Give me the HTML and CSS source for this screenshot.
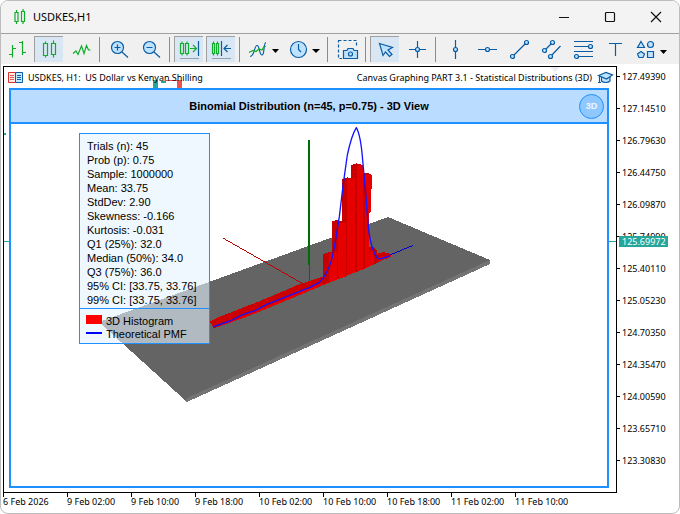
FILE: index.html
```html
<!DOCTYPE html>
<html lang="en">
<head>
<meta charset="utf-8">
<title>USDKES,H1</title>
<link rel="stylesheet" href="styles.css">
</head>
<body>
<div class="window">
  <header class="titlebar">
    <svg class="app-icon" width="14" height="16" viewBox="0 0 14 16" aria-hidden="true"><path class="gr" d="M2 3.500h3v9H2zM3.500 1v2.500M3.500 12.500V15M8.500 2.500h3v10h-3zM10 0v2.500M10 12.500V15"/></svg>
    <h1 class="window-title">USDKES,H1</h1>
    <div class="window-controls">
      <button type="button" aria-label="Minimize"><svg width="12" height="12" viewBox="0 0 12 12"><path class="bk" d="M1 6.500h10"/></svg></button>
      <button type="button" aria-label="Maximize"><svg width="12" height="12" viewBox="0 0 12 12"><rect class="bk" x="1.500" y="1.500" width="9" height="9" rx="1"/></svg></button>
      <button type="button" aria-label="Close"><svg width="12" height="12" viewBox="0 0 12 12"><path class="bk" d="M1 1l10 10M11 1L1 11"/></svg></button>
    </div>
  </header>

  <nav class="toolbar" aria-label="Chart tools">
    <button type="button" class="tool" aria-label="Bars"><svg viewBox="1 2 29 26"><path class="gr" d="M11.500 11v12.500M8 20.500h3.500M11.500 14.500H15M21.500 7v14M18 8.500h3.500M21.500 18.500H25"/></svg></button>
    <button type="button" class="tool on" aria-label="Candlesticks"><svg viewBox="1 2 29 26"><path class="gr" d="M10.500 9.500h4v12h-4zM12.500 7.500v2M12.500 21.500v2M18.500 9.500h4v11h-4zM20.500 6.500v3M20.500 20.500v3"/></svg></button>
    <button type="button" class="tool" aria-label="Line chart"><svg viewBox="1 2 29 26"><path class="gr" d="M8 19.500L11 17l2 3.500 3.500-8.500 2.500 7.500 2.500-8 2 4.500h2"/></svg></button>
    <span class="sep"></span>
    <button type="button" class="tool" aria-label="Zoom in"><svg viewBox="1 2 29 26"><path class="bl" d="M19 18l6 5.500"/><circle class="bf" cx="14.500" cy="13.500" r="6"/><path class="bl" d="M11.500 13.500h6M14.500 10.500v6"/></svg></button>
    <button type="button" class="tool" aria-label="Zoom out"><svg viewBox="1 2 29 26"><path class="bl" d="M19 18l6 5.500"/><circle class="bf" cx="14.500" cy="13.500" r="6"/><path class="bl" d="M11.500 13.500h6"/></svg></button>
    <span class="sep"></span>
    <button type="button" class="tool on" aria-label="Auto scroll"><svg viewBox="1 2 29 26"><path class="gr" d="M7.500 9.500h3v10h-3zM9 7.500v2M9 19.500v2M12.500 9.500h3v10h-3zM14 7.500v2M14 19.500v2M17 14.500h6.500M20 11l3.500 3.500L20 18"/><path class="bl" d="M25.500 7v15"/><path class="un" d="M7 24.500h19"/></svg></button>
    <button type="button" class="tool on" aria-label="Chart shift"><svg viewBox="1 2 29 26"><path class="gr" d="M7.500 9.500h2v10h-2zM8.500 7.500v2M8.500 19.500v2M11.500 9.500h2v10h-2zM12.500 7.500v2M12.500 19.500v2"/><path class="bl" d="M16.500 7v15M26 14.500h-6.500M22.500 11L19 14.500l3.500 3.500"/><path class="un" d="M7 24.500h19"/></svg></button>
    <span class="sep"></span>
    <button type="button" class="tool menu" aria-label="Indicators"><svg viewBox="1 2 38 26"><path class="bl" d="M7 22.500c5 0 4-11 7-11s2 9.500 5 9.500 1-12 4-12.500"/><path class="gr" d="M6 18.500l4-2 3 1 3-2.500 3 1 2-3.500h2"/><path class="ar" d="M29 15h7l-3.500 4z"/></svg></button>
    <button type="button" class="tool menu" aria-label="Timeframes"><svg viewBox="1 2 38 26"><circle class="bf" cx="14.500" cy="15.500" r="8"/><path class="bl" d="M14.500 10v5.500l2.500 2.500"/><path class="ar" d="M28 15h8l-4 4z"/></svg></button>
    <span class="sep"></span>
    <button type="button" class="tool" aria-label="Screenshot"><svg viewBox="1 2 29 26"><rect class="bl" x="7.500" y="6.500" width="18" height="18" stroke-dasharray="3 2"/><path d="M11 13h16v13H11z" fill="#f0f0f0"/><path class="bf" d="M12.500 16.500h3.500l1-2h5l1 2h3.500v8h-14z"/><circle class="bl" cx="19.500" cy="20" r="2"/></svg></button>
    <span class="sep"></span>
    <button type="button" class="tool on" aria-label="Cursor"><svg viewBox="1 2 29 26"><path class="bf" d="M10.500 9.500l13 4-4.500 2.500 4 4.500-2.500 2-4-4.500-2.500 3.500z"/></svg></button>
    <button type="button" class="tool" aria-label="Crosshair"><svg viewBox="1 2 29 26"><path class="bl" d="M16.500 7v17M8 15.500h17"/><circle class="bf" cx="16.500" cy="15.500" r="2"/></svg></button>
    <span class="sep"></span>
    <button type="button" class="tool" aria-label="Vertical line"><svg viewBox="1 2 29 26"><path class="bl" d="M16.500 6v19"/><circle class="bf" cx="16.500" cy="15.500" r="2"/></svg></button>
    <button type="button" class="tool" aria-label="Horizontal line"><svg viewBox="1 2 29 26"><path class="bl" d="M7 15.500h19"/><circle class="bf" cx="16.500" cy="15.500" r="2"/></svg></button>
    <button type="button" class="tool" aria-label="Trendline"><svg viewBox="1 2 29 26"><path class="bl" d="M9.500 22.500l14-14"/><circle class="bf" cx="9.500" cy="22.500" r="2"/><circle class="bf" cx="23.500" cy="8.500" r="2"/></svg></button>
    <button type="button" class="tool" aria-label="Channel"><svg viewBox="1 2 29 26"><path class="bl" d="M9.500 16.500l8-8M15.500 22.500l10-10.500"/><circle class="bf" cx="9.500" cy="16.500" r="2"/><circle class="bf" cx="17.500" cy="8.500" r="2"/><circle class="bf" cx="15.500" cy="22.500" r="2"/></svg></button>
    <button type="button" class="tool" aria-label="Fibonacci"><svg viewBox="1 2 29 26"><path class="bl" d="M7 7.500h19M7 12.500h15M7 17.500h19M11 22.500h15"/><circle class="bf" cx="23.500" cy="12.500" r="2"/><circle class="bf" cx="9.500" cy="22.500" r="2"/></svg></button>
    <button type="button" class="tool" aria-label="Text"><svg viewBox="1 2 29 26"><path class="bl" d="M10 9.500h13M16.500 9.500V22"/></svg></button>
    <button type="button" class="tool menu" aria-label="Shapes"><svg viewBox="1 2 38 26"><path class="bf" d="M10 7.500l3.500 6h-7zM16.500 17.500h6v6h-6zM10 17.500l3.500 2.500-1.500 3.500H8L6.500 20z"/><circle class="bf" cx="19.500" cy="10.500" r="3"/><path class="ar" d="M29 16h7l-3.500 4z"/></svg></button>
  </nav>

  <main class="chart">
    <section class="plot">
      <div class="info">
        <svg class="candles" width="32" height="8" viewBox="0 0 32 8" aria-hidden="true"><path d="M1 0h5v8H1zM9 1h5v2H9z" fill="#26a69a"/><path d="M14 0h16v8h-5V1H14z" fill="#ef5350"/></svg>
        <svg class="shift-mark" width="10" height="5" viewBox="0 0 10 5" aria-hidden="true"><path d="M0 0h10L5 5z" fill="#efe9f3"/></svg>
        <svg class="info-icon" width="15" height="12" viewBox="0 0 15 12" aria-hidden="true"><path d="M.5.5h7v10h-7z" fill="#ffe9e6" stroke="#d9312d"/><path d="M7.500.5h7v10h-7z" fill="#c8e8ff" stroke="#0a5ca4"/><path d="M2 3.500h4M2 5.500h4M2 7.500h4" stroke="#df5a56"/><path d="M9 3.500h4M9 5.500h4M9 7.500h4" stroke="#0a5ca4"/></svg>
        <span class="symbol">USDKES, H1:&nbsp; US Dollar vs Kenyan Shilling</span>
        <span class="expert">Canvas Graphing PART 3.1 - Statistical Distributions (3D)</span>
        <svg class="cap" width="15" height="12" viewBox="0 0 15 12" aria-hidden="true"><path class="bf" d="M3.500 5v4c2 2 6.500 2 8.500 0V5"/><path class="bf" d="M.5 3.500L8 .5l6.500 2.500-6 4z"/><path class="bl" d="M1.500 4v7M0 10.500h3"/></svg>
      </div>
      <div class="canvas">
        <div class="canvas-head">
          <h2>Binomial Distribution (n=45, p=0.75) - 3D View</h2>
          <button type="button" class="mode">3D</button>
        </div>
        <div class="scene">
          <svg class="scene-art" viewBox="11 124 596 362" role="img" aria-label="3D histogram with theoretical curve">
            <g shape-rendering="crispEdges">
              <path fill="#747474" d="M99 322L388 217 490 260v4L187 402z"/>
              <path fill="#646464" d="M99 322L388 217 490 260 187 398 185 400z"/>
              <g transform="translate(200 120) scale(.33333)">
                <path d="M70 355L310 492" stroke="#c00000" stroke-width="3"/>
                <path d="M30 605L60 590 180 543 300 492 370 469 372 490 340 505 220 553 130 590 42 625z" fill="#cc0000"/>
                <path d="M42 625L130 588 220 550 340 500 385 482 388 488 220 558 130 594z" fill="#e60000"/>
                <path d="M370 402L388 396H397V303L413 300 427 304V177L441 172 454 175V135L470 130 490 135V160L506 160 516 166V205L512 208V275L508 280V382L522 382 530 390V402L550 396 572 402V410L480 452 390 486 370 492z" fill="#c80000"/>
                <path d="M388 400l22-4v84l-22 8zM413 308l24 2v160l-24 8zM442 180l24-8v285l-24 9zM470 138l20-4v313l-20 8zM495 165l21 0v40l-4 2v70l-4 3v160l-13 6zM508 395l14-6v44l-14 5zM530 412l42-6v4l-42 18z" fill="#e60000"/>
                <path d="M326 60V435" stroke="#006c08" stroke-width="6"/>
                <path d="M328 435V488" stroke="#007000" stroke-width="3"/>
                <path d="M570 405L640 376" stroke="#0000d8" stroke-width="3"/>
              </g>
            </g>
            <path transform="translate(200 120) scale(.33333)" fill="none" stroke="#1414ff" stroke-width="4" stroke-linejoin="round" d="M40 620L90 603 130 583 165 572 200 553 260 530 330 502 358 487Q382 465 396 415 406 370 418 290L430 190 442 105Q455 45 469 23 482 45 488 120L497 220 504 310Q510 375 525 403 534 419 542 416L570 408"/>
          </svg>
          <aside class="panel">
            <ul class="stats">
              <li>Trials (n): 45</li>
              <li>Prob (p): 0.75</li>
              <li>Sample: 1000000</li>
              <li>Mean: 33.75</li>
              <li>StdDev: 2.90</li>
              <li>Skewness: -0.166</li>
              <li>Kurtosis: -0.031</li>
              <li>Q1 (25%): 32.0</li>
              <li>Median (50%): 34.0</li>
              <li>Q3 (75%): 36.0</li>
              <li>95% CI: [33.75, 33.76]</li>
              <li>99% CI: [33.75, 33.76]</li>
            </ul>
            <ul class="legend">
              <li><i class="key bar"></i>3D Histogram</li>
              <li><i class="key line"></i>Theoretical PMF</li>
            </ul>
          </aside>
        </div>
      </div>
    </section>
    <ol class="prices">
      <li>127.49390</li><li>127.14510</li><li>126.79630</li><li>126.44750</li><li>126.09870</li><li>125.74990</li><li>125.40110</li><li>125.05230</li><li>124.70350</li><li>124.35470</li><li>124.00590</li><li>123.65710</li><li>123.30830</li>
    </ol>
    <span class="current">125.69972</span>
    <ol class="times">
      <li>6 Feb 2026</li><li>9 Feb 02:00</li><li>9 Feb 10:00</li><li>9 Feb 18:00</li><li>10 Feb 02:00</li><li>10 Feb 10:00</li><li>10 Feb 18:00</li><li>11 Feb 02:00</li><li>11 Feb 10:00</li>
    </ol>
  </main>
</div>
</body>
</html>
```

FILE: styles.css
```css
* { box-sizing: border-box; }
body { margin: 0; background: #fff; color: #000; }
h1, h2, ul, ol { margin: 0; padding: 0; font-weight: normal; list-style: none; }
button { padding: 0; border: 0; background: none; font: inherit; color: inherit; }
svg { display: block; flex: none; overflow: visible; }

.window {
  display: flex;
  flex-direction: column;
  min-height: 100vh;
  border: 1px solid #bcbcbc;
  border-radius: 8px;
  overflow: hidden;
  background: #fff;
}

.gr { fill: none; stroke: #12ab2c; stroke-width: 1.2; }
.bl { fill: none; stroke: #0a5ca4; stroke-width: 1.2; }
.bf { fill: #bfe2ff; stroke: #0a5ca4; stroke-width: 1.2; }
.bk { fill: none; stroke: #111; stroke-width: 1.2; }
.un { fill: none; stroke: #9a9fa6; }
.ar { fill: #000; }

.titlebar {
  display: flex;
  align-items: center;
  height: 33px;
  padding-left: 12px;
  border-bottom: 1px solid #a0a0a0;
  background: #f3f3f3;
}
.window-title { flex: 1; margin-left: 6px; font: 11px/20px "Noto Sans", sans-serif; }
.window-controls { display: flex; }
.window-controls button { display: grid; place-items: center; width: 46px; height: 30px; }

.toolbar { display: flex; height: 30px; padding: 2px 0; background: #f0f0f0; }
.tool { width: 29px; height: 26px; margin: 0 2px 0 1px; flex: none; }
.tool svg { width: 29px; height: 26px; }
.tool.menu { width: 38px; }
.tool.menu svg { width: 38px; }
.tool.on { background: #d9e6f3; box-shadow: inset 1px 1px #a0a0a0; }
.sep { flex: none; width: 1px; height: 25px; margin: 1px 3px 0 2px; background: #8c8c8c; }

.chart {
  position: relative;
  flex: 1;
  display: grid;
  grid-template: 1fr 20px / 1fr 62px;
  padding: 2px 0 0 2px;
  font: 9px/12px "Noto Sans", sans-serif;
  white-space: nowrap;
}
.plot {
  position: relative;
  display: flex;
  flex-direction: column;
  min-width: 0;
  border: 1px solid #000;
}
.plot::before, .plot::after { content: ""; position: absolute; left: 0; background: #26a69a; }
.plot::before { top: 174px; right: 0; height: 1px; }
.plot::after { top: 66px; width: 2px; height: 2px; }
.info {
  position: relative;
  display: flex;
  align-items: center;
  height: 21px;
  padding: 0 3px 0 4px;
}
.symbol { position: relative; margin-left: 5px; }
.expert { margin-left: auto; margin-right: 6px; }
.candles { position: absolute; left: 148px; bottom: 0; }
.shift-mark { position: absolute; right: 56px; top: 0; }

.canvas {
  position: relative;
  flex: 1;
  display: flex;
  flex-direction: column;
  margin: 0 7px 4px 5px;
  border: 2px solid #1e90ff;
  background: #fff;
}
.canvas-head {
  position: relative;
  display: flex;
  align-items: center;
  justify-content: center;
  height: 34px;
  border-bottom: 2px solid #1e90ff;
  background: #badcff;
}
.canvas-head h2 { font: bold 11px/14px "Liberation Sans", Arial, sans-serif; }
.mode {
  position: absolute;
  right: 3px;
  width: 25px;
  height: 25px;
  border: 1px solid #1e90ff;
  border-radius: 50%;
  background: #8fc8ff;
  color: #eef7ff;
  font: bold 9px/12px "Liberation Sans", Arial, sans-serif;
}
.scene { position: relative; flex: 1; }
.scene-art { width: 100%; }
.panel {
  position: absolute;
  left: 68px;
  top: 9px;
  width: 131px;
  border: 1px solid #1e90ff;
  background: rgba(230, 243, 255, 0.6);
  font: 11px/14px "Liberation Sans", Arial, sans-serif;
}
.stats { padding: 5px 7px 1px; border-bottom: 1px solid #1e90ff; }
.legend { padding: 6px 6px 2px; line-height: 13px; }
.legend li { display: flex; align-items: center; gap: 4px; }
.key { width: 16px; margin-bottom: 4px; }
.key.bar { height: 9px; background: #f00; }
.key.line { height: 2px; background: #00f; }

.prices li { position: relative; height: 32px; padding-left: 5px; line-height: 21px; }
.prices li::before { content: ""; position: absolute; left: 0; top: 10px; width: 3px; height: 1px; background: #000; }
.current {
  position: absolute;
  right: 11px;
  top: 172px;
  width: 49px;
  padding-left: 3px;
  background: #26a69a;
  color: #fff;
  line-height: 11px;
}
.times { grid-column: 1 / -1; display: flex; }
.times li { flex: none; width: 64px; position: relative; line-height: 18px; }
.times li::before { content: ""; position: absolute; left: 0; top: 0; width: 1px; height: 4px; background: #000; }
```
